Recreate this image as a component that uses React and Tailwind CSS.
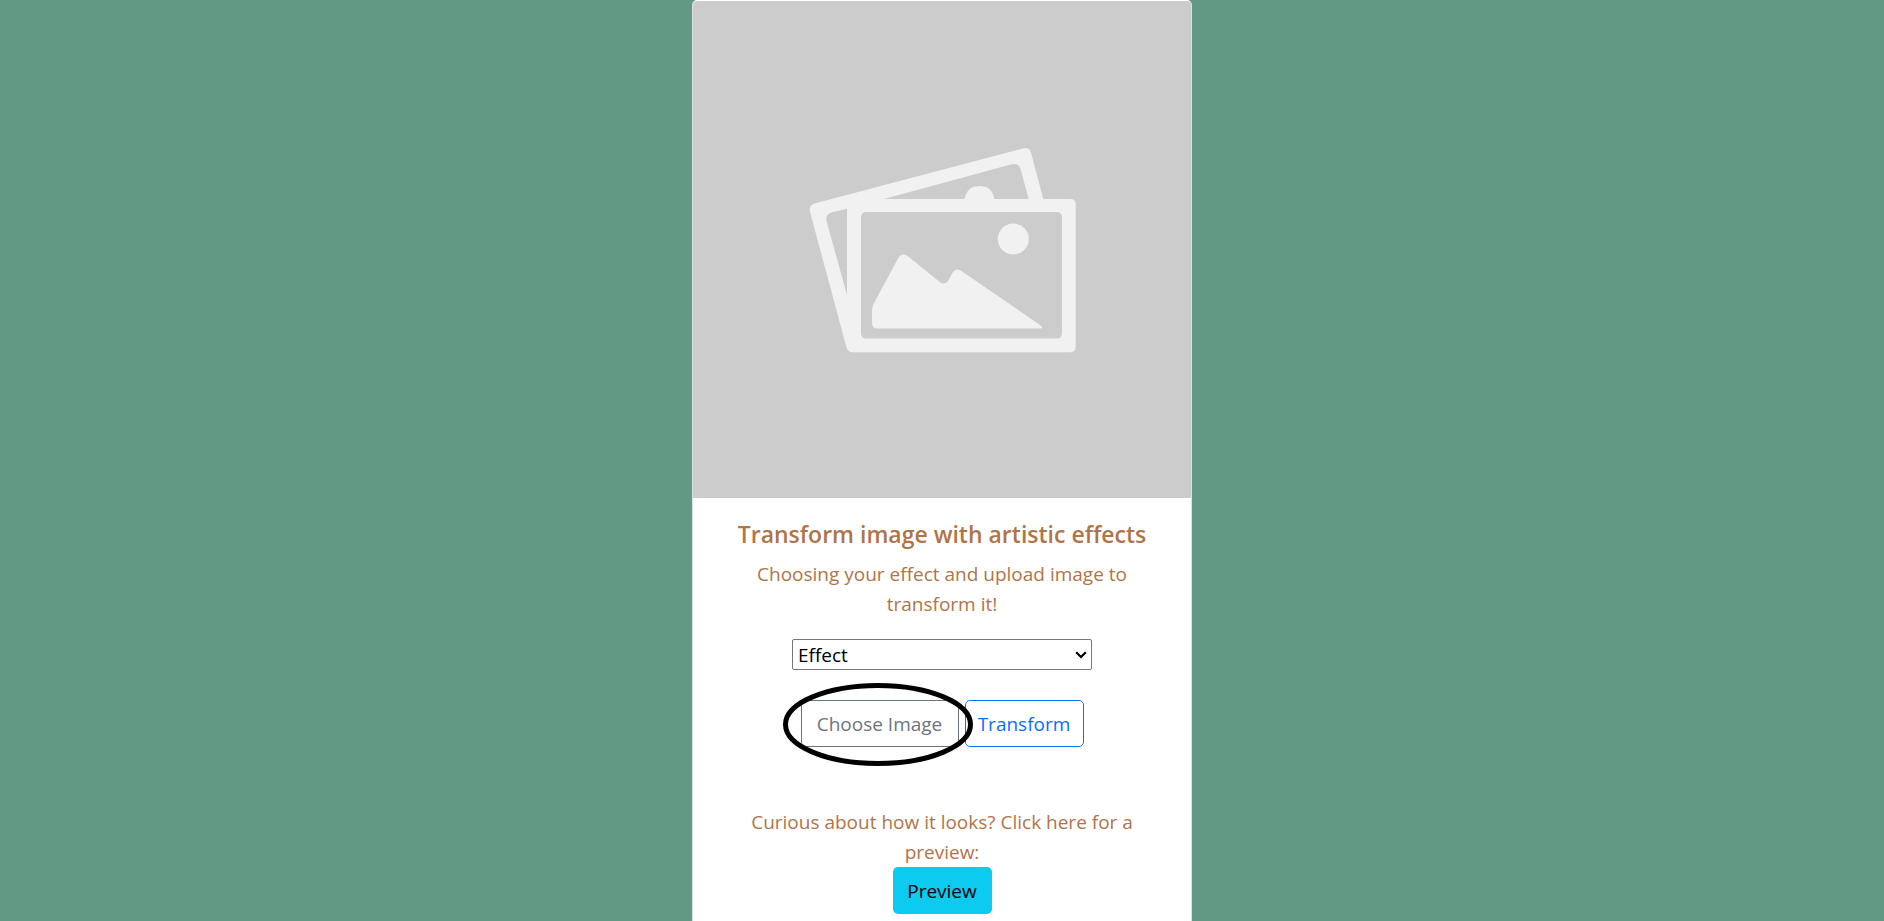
import React from "react";

function Placeholder() {
  return (
    <svg
      className="block aspect-[498/497] w-full rounded-t-[4px]"
      viewBox="0 0 498 497"
      role="img"
      aria-label="Image placeholder"
    >
      <rect width="498" height="497" fill="#ccc" />
      <g transform="translate(113 129)" fill="#f1f1f1">
        <path
          fillRule="evenodd"
          d="M46.500 222.300 Q42 222.300 40.500 217.500 L3.900 81.500 Q2.500 75.500 8.500 73.500 L218 18.200 Q223.300 17.300 225 22.500 L237.300 69 L264.500 69 Q269.700 69 269.700 74.500 L269.700 216.500 Q269.700 222.300 264 222.300 Z M237.300 69 L222.700 69 L214.500 39 Q212.500 32.800 205.700 34.300 L78 69 L158.700 69 Q161 56 173.500 56 Q186 56 188.300 69 Z M41 78.700 L25.700 82.500 Q19 84.800 20.500 91 L41 165 Z M60.500 82 Q55 82 55 87.500 L55 203 Q55 208.500 60.500 208.500 L250.500 208.500 Q256 208.500 256 203 L256 87.500 Q256 82 250.500 82 Z"
        />
        <circle cx="207.300" cy="109" r="15.500" />
        <path d="M71.500 198.500 Q66 198.500 66 193 L66 181 Q66 176 68.500 172 L92.300 128 Q96 122 102.300 126.500 L132.500 151 Q138 156 142 151 L146.300 143 Q150 137 155.500 141 L234 195 Q238 198.500 234.500 198.500 Z" />
      </g>
    </svg>
  );
}

export default function App() {
  return (
    <main className="flex min-h-screen justify-center bg-[#629985] font-['Open_Sans','Segoe_UI',sans-serif] text-[19px] leading-[30px]">
      <section className="w-full max-w-[500px] rounded-t-[5px] border border-b-0 border-[#dfdfdf] border-t-white bg-white text-center text-[#b07449]">
        <Placeholder />
        <div className="flex flex-col items-center px-5 pt-[21px] pb-2">
          <h1 className="mb-2.5 text-[23px] leading-[30px] font-semibold">
            Transform image with artistic effects
          </h1>
          <p className="mb-5 px-5">Choosing your effect and upload image to transform it!</p>
          <div className="relative">
            <select
              aria-label="Effect"
              className="block h-[31px] w-[300px] appearance-none rounded-[2px] border border-[#767676] bg-white pl-[5px] text-black"
            >
              <option>Effect</option>
            </select>
            <svg
              className="pointer-events-none absolute top-3 right-[5px] h-[8px] w-[12px]"
              viewBox="0 0 12 8"
              fill="none"
              stroke="#000"
              strokeWidth="2.200"
              aria-hidden="true"
            >
              <path d="M1.200 1.200 L6 6 L10.800 1.200" />
            </svg>
          </div>
          <div className="mt-[30px] flex gap-1.5">
            <div className="relative">
              <button
                type="button"
                className="block h-[47px] w-[158px] rounded-[5px] border border-[#6c757d] text-[#6c757d]"
              >
                Choose Image
              </button>
              <svg
                className="pointer-events-none absolute -top-[17px] -left-[18px] h-[83px] w-[190px]"
                viewBox="0 0 190 83"
                aria-hidden="true"
              >
                <ellipse cx="95" cy="41.500" rx="92.500" ry="39" fill="none" stroke="#000" strokeWidth="5" />
              </svg>
            </div>
            <button
              type="button"
              className="h-[47px] w-[119px] rounded-[5px] border border-[#0d6efd] text-[#0d6efd]"
            >
              Transform
            </button>
          </div>
          <p className="mt-[60px] px-5">Curious about how it looks? Click here for a preview:</p>
          <button type="button" className="h-[47px] w-[99px] rounded-[5px] bg-[#0dcaf0] text-black">
            Preview
          </button>
        </div>
      </section>
    </main>
  );
}
